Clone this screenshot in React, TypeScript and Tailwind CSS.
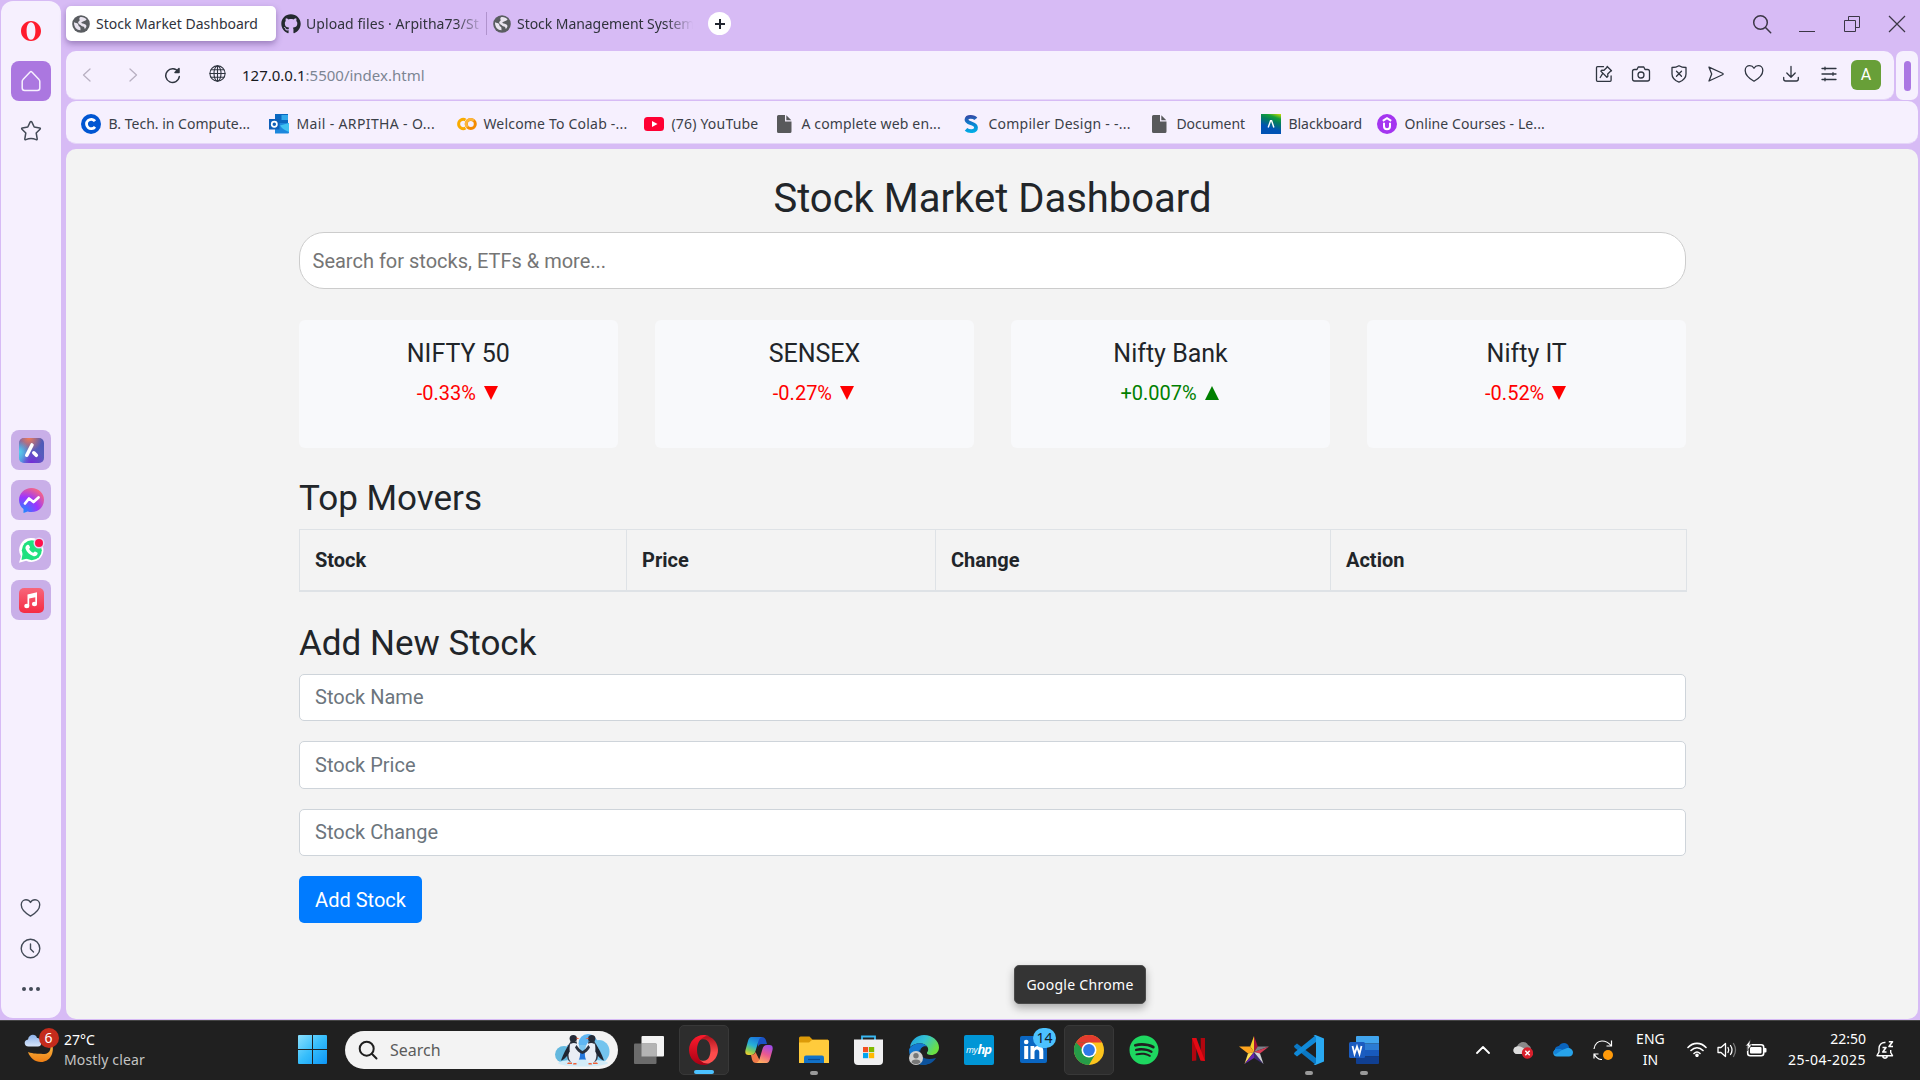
import type { ReactNode } from "react";
import { FaGithub, FaSpotify } from "react-icons/fa";

type IconProps = { className?: string };

/* ---------- browser icons ---------- */

const GlobeFavicon = () => (
  <svg viewBox="0 0 18 18" className="size-[18px] shrink-0">
    <circle cx="9" cy="9" r="8.8" fill="#5a5d61" />
    <path
      d="M2 7.2c1.6.9 3 .7 3.8 1.6.9 1 .4 2.2 1.5 2.8 1.3.7 1.2 1.7 1.2 3.6-3.6 0-6.7-3-6.5-8zM8 2.2c2.5-.6 5.3.6 6.6 2.3-1 .7-1.2 1.5-2.4 1.5-.9 0-1.2.9-2.2 1-1.1.1-.6 1.5.6 1.6 1.7.2 3.3.9 3.8 2.2.3 1-.8 2.6-1.8 3.3.1-1.3-.4-2.2-1.6-2.500C9.500 11.200 9 10 7.500 9.400 5.600 8.500 5.800 6.600 7.200 6c1-.4.200-1.400.1-2.200-.1-.6.200-1.300.7-1.600z"
      fill="#e9e4ef"
    />
  </svg>
);

const FileIcon = () => (
  <svg viewBox="0 0 15 18" className="h-[18px] w-[15px]">
    <path d="M1.5 0H8v6.5h6.5v10A1.5 1.5 0 0 1 13 18H1.5A1.5 1.5 0 0 1 0 16.5v-15A1.5 1.5 0 0 1 1.5 0z" fill="#58595b" />
    <path d="M9.3.2l5 5h-5z" fill="#58595b" />
  </svg>
);

const OperaMark = ({ className }: IconProps) => (
  <svg viewBox="0 0 20 20" className={className}>
    <path
      fillRule="evenodd"
      d="M10 0c5.6 0 10 4.5 10 10s-4.4 10-10 10S0 15.5 0 10 4.400 0 10 0zm0 1.200C7.200 1.200 5.600 5 5.600 10s1.600 8.800 4.400 8.800 4.400-3.800 4.400-8.800S12.800 1.200 10 1.200z"
      fill="#ff1b2d"
    />
  </svg>
);

const Line = ({ className, children, box = "0 0 20 20", w = 1.3 }: { className?: string; children: ReactNode; box?: string; w?: number }) => (
  <svg viewBox={box} className={className} fill="none" stroke="currentColor" strokeWidth={w} strokeLinecap="round" strokeLinejoin="round">
    {children}
  </svg>
);

const HeartShape = () => <path d="M10 17.200C6.500 15.200 1.200 11.500 1.200 6.400 1.200 3.600 3.200 1.700 5.700 1.700c1.900 0 3.400.9 4.300 2.500.9-1.600 2.400-2.500 4.300-2.500 2.500 0 4.500 1.900 4.500 4.700 0 5.100-5.300 8.800-8.800 10.800z" />;

const toolbarIcons: ReactNode[] = [
  <>
    <path d="M9.500 2.700H3.500q-1 0-1 1v12.600q0 1 1 1h12.600q1 0 1-1V12" />
    <path d="M13.200 2.500l4.300 4.300-1 .4-2.800 2.800.2 2.200-1 1-4.300-4.300M13.200 2.500l-.4 1-2.800 2.800-2.200-.2-1 1 2.100 2.100M8.900 9.200L6.200 13.500" />
  </>,
  <>
    <path d="M3.500 5.500H6L7.200 3h5.600L14 5.500h2.500q2 0 2 2V15q0 2-2 2h-13q-2 0-2-2V7.500q0-2 2-2z" />
    <circle cx="10" cy="11" r="3" />
  </>,
  <>
    <path d="M10 1.700c2 1.300 4.500 1.800 7 1.800V10c0 4-3.500 6.800-7 8.200C6.500 16.800 3 14 3 10V3.500c2.500 0 5-.5 7-1.800z" />
    <path d="M7.500 7.200l5 5M12.500 7.200l-5 5" />
  </>,
  <path d="M3 3.200L17 9.500v1L3 17l2.700-7z" />,
  <HeartShape />,
  <path d="M10 2.500v10.500M5.800 9l4.200 4.200L14.200 9M2.700 13.500V15q0 2 2 2h10.600q2 0 2-2v-1.500" />,
  <path d="M3 4.500h14M3 10h14M3 15.500h14M6 3.200v2.600M14 8.700v2.600M6 14.200v2.600" />,
];

/* ---------- browser data ---------- */

const bookmarks: { icon: ReactNode; label: string; width: string; tracking: string }[] = [
  {
    icon: (
      <svg viewBox="0 0 20 20" className="size-5">
        <circle cx="10" cy="10" r="10" fill="#0056d2" />
        <path d="M14 7.200a4.700 4.700 0 1 0 0 5.600" fill="none" stroke="#fff" strokeWidth="2.8" />
      </svg>
    ),
    label: "B. Tech. in Compute...",
    width: "w-[188px]",
    tracking: "tracking-normal",
  },
  {
    icon: (
      <svg viewBox="0 0 20 20" className="size-5">
        <path d="M6 0h13v11H6z" fill="#0a68c0" />
        <path d="M12.500 1H19v5h-6.500z" fill="#32a8ea" />
        <path d="M6 9l14 0v9.500q0 1-1 1H6z" fill="#1c87dd" />
        <path d="M20 9v9q-7-3-9-6.500z" fill="#3fc2f2" />
        <path d="M0 5h10.500v10.500H0z" fill="#0f5fb8" />
        <circle cx="5.300" cy="10.200" r="2.600" fill="none" stroke="#fff" strokeWidth="1.7" />
      </svg>
    ),
    label: "Mail - ARPITHA - O...",
    width: "w-[187px]",
    tracking: "tracking-[0.37px]",
  },
  {
    icon: (
      <svg viewBox="0 0 21 20" className="h-5 w-[21px] shrink-0" fill="none" strokeWidth="3">
        <path d="M9.500 6A4.600 4.600 0 1 0 9.500 14" stroke="#f9ab00" />
        <circle cx="14.800" cy="10" r="4.500" stroke="#f48b00" />
        <path d="M11.500 13.200A4.500 4.500 0 0 1 17.800 6.700" stroke="#fbb53b" />
      </svg>
    ),
    label: "Welcome To Colab -...",
    width: "w-[188px]",
    tracking: "tracking-[0.2px]",
  },
  {
    icon: (
      <svg viewBox="0 0 20 20" className="size-5">
        <rect y="3" width="20" height="14" rx="3.500" fill="#ff0033" />
        <path d="M8 7l5.500 3L8 13z" fill="#fff" />
      </svg>
    ),
    label: "(76) YouTube",
    width: "w-[130px]",
    tracking: "tracking-[0.2px]",
  },
  { icon: <FileIcon />, label: "A complete web en...", width: "w-[187px]", tracking: "tracking-[0.15px]" },
  {
    icon: (
      <svg viewBox="0 0 20 20" className="size-5" fill="none">
        <path d="M14.800 4.800C13 2.500 6 1.500 5.500 5.500 5 10 15 8.500 15 13.500c0 4.500-7 4.500-10 1.800" stroke="url(#bmS)" strokeWidth="3.8" />
        <defs>
          <linearGradient id="bmS" x1="8" y1="0" x2="10" y2="20" gradientUnits="userSpaceOnUse">
            <stop stopColor="#3c3f9e" />
            <stop offset=".5" stopColor="#0a82d0" />
            <stop offset="1" stopColor="#00b5ea" />
          </linearGradient>
        </defs>
      </svg>
    ),
    label: "Compiler Design - -...",
    width: "w-[188px]",
    tracking: "tracking-[0.25px]",
  },
  { icon: <FileIcon />, label: "Document", width: "w-[112px]", tracking: "tracking-normal" },
  {
    icon: (
      <div className="flex size-5 items-center justify-center bg-[linear-gradient(20deg,#0052b4_35%,#04805a_65%,#12a03c_80%,#d5e000)]">
        <svg viewBox="0 0 10 10" className="size-2">
          <path d="M1.500 9.500L4.500.8h1.200l2.900 8.700" fill="none" stroke="#fff" strokeWidth="1.8" />
        </svg>
      </div>
    ),
    label: "Blackboard",
    width: "w-[116px]",
    tracking: "tracking-normal",
  },
  {
    icon: (
      <svg viewBox="0 0 20 20" className="size-5">
        <circle cx="10" cy="10" r="10" fill="#a435f0" />
        <path d="M5.800 6.800L10 4.200l4.200 2.600M7 8.800v3.500q0 3 3 3t3-3V8.800" fill="none" stroke="#fff" strokeWidth="2" />
      </svg>
    ),
    label: "Online Courses - Le...",
    width: "w-[180px]",
    tracking: "tracking-[0.1px]",
  },
];

/* ---------- sidebar ---------- */

const AriaLogo = () => (
  <svg viewBox="0 0 25 25" className="size-[25px]">
    <defs>
      <linearGradient id="ar1" x1="0" y1="1" x2="1" y2="0">
        <stop stopColor="#49c2ea" />
        <stop offset=".4" stopColor="#5a62c0" />
        <stop offset="1" stopColor="#4c57b5" />
      </linearGradient>
      <radialGradient id="ar2" cx=".4" cy="0" r=".55">
        <stop stopColor="#f27a56" />
        <stop offset="1" stopColor="#f27a56" stopOpacity="0" />
      </radialGradient>
      <radialGradient id="ar3" cx=".5" cy="1" r=".55">
        <stop stopColor="#7527d5" />
        <stop offset="1" stopColor="#7527d5" stopOpacity="0" />
      </radialGradient>
      <radialGradient id="ar4" cx="0" cy=".55" r=".45">
        <stop stopColor="#56d0ee" />
        <stop offset="1" stopColor="#56d0ee" stopOpacity="0" />
      </radialGradient>
    </defs>
    <rect width="25" height="25" rx="5" fill="url(#ar1)" />
    <rect width="25" height="25" rx="5" fill="url(#ar2)" />
    <rect width="25" height="25" rx="5" fill="url(#ar3)" />
    <rect width="25" height="25" rx="5" fill="url(#ar4)" />
    <path d="M13 7L7.800 17.200M14.800 14.800l2.500 2.500" stroke="#fff" strokeWidth="3.6" strokeLinecap="round" />
  </svg>
);

const MessengerLogo = () => (
  <svg viewBox="0 0 25 25" className="size-[25px]">
    <defs>
      <radialGradient id="ms" cx=".15" cy="1" r="1.15">
        <stop stopColor="#1292ff" />
        <stop offset=".55" stopColor="#9c35ff" />
        <stop offset="1" stopColor="#ff6a78" />
      </radialGradient>
    </defs>
    <path d="M12.500 0C19.500 0 25 5 25 12s-5.500 12-12.500 12q-2 0-3.800-.6L4.500 25V21C1.500 18.800 0 15.500 0 12 0 5 5.500 0 12.500 0z" fill="url(#ms)" />
    <path d="M6 15.500l4-5 4.500 3.500 5-4.500" fill="none" stroke="#fff" strokeWidth="2.8" strokeLinejoin="round" strokeLinecap="round" />
  </svg>
);

const WhatsAppLogo = () => (
  <div className="relative size-[25px]">
    <svg viewBox="0 0 25 25" className="size-[25px]">
      <path d="M12.700 0a12 12 0 1 1-5.500 22.800L0 24.800l2-6.500A12 12 0 0 1 12.700 0z" fill="#fff" />
      <circle cx="12.800" cy="12.300" r="10" fill="#1fe07f" />
      <path d="M3.500 16l-1 6 6-1.500z" fill="#1fe07f" />
      <path d="M8.500 6.800c.7-.3 1.400-.1 1.700.6l.8 1.900c.2.600-.7 1.300-.9 1.700 1 1.900 2.300 3 4.200 3.800.5-.3 1.200-1.500 1.800-1.200l2 1c.7.300.6 1 .3 1.700-.7 1.600-2.600 2.200-4.200 1.700-3.700-1.100-6.300-3.600-7.600-6.900-.6-1.700.3-3.700 1.900-4.300z" fill="#fff" />
    </svg>
    <div className="absolute right-px top-px size-[8px] rounded-full bg-[#ff0f4b] ring-[1.5px] ring-[#e4d6f5]" />
  </div>
);

const MusicLogo = () => (
  <svg viewBox="0 0 25 25" className="size-[25px]">
    <defs>
      <linearGradient id="mu" x1="0" y1="0" x2="0" y2="1">
        <stop stopColor="#f7667b" />
        <stop offset="1" stopColor="#f52b43" />
      </linearGradient>
    </defs>
    <rect width="25" height="25" rx="5" fill="url(#mu)" />
    <path d="M8.500 6.500L18 4.300V16h-1.700V9.200L10.200 10.600V18H8.500z" fill="#fff" />
    <ellipse cx="7.800" cy="18" rx="2.600" ry="2.200" fill="#fff" />
    <ellipse cx="15.500" cy="16" rx="2.600" ry="2.200" fill="#fff" />
  </svg>
);

function Sidebar() {
  return (
    <aside className="ml-px mt-px flex h-[1017px] w-[60px] shrink-0 flex-col items-center rounded-[12px] bg-[#f6f0fe] pb-[13px] pt-5 text-[#434a57]">
      <OperaMark className="size-5" />
      <div className="mt-5 flex size-10 items-center justify-center rounded-[8px] bg-[#ab77e0] text-[#f6f0fe]">
        <Line className="size-[22px]" box="0 0 22 22" w={1.5}>
          <path d="M11 1.500q.5 0 .9.500L19 9.500q.8.800.8 2V18q0 2.500-2.500 2.500H4.700Q2.200 20.500 2.200 18v-6.500q0-1.200.8-2L10.100 2q.4-.5.900-.5z" />
        </Line>
      </div>
      <Line className="mr-px mt-[19px] size-[22px]" box="0 0 22 22" w={1.5}>
        <path d="M11 1.500q.6 0 .9.600l2.300 4.900 5.400.9q1.300.3.400 1.300L16.200 13l1 5.800q.1 1.400-1.100.8Q11 17.500 5.900 19.600q-1.200.6-1.100-.8l1-5.800L2 9.200q-.9-1 .4-1.300l5.400-.9 2.300-4.900q.3-.6.900-.6z" />
      </Line>
      <div className="mt-[288px] flex flex-col gap-[10px]">
        {[<AriaLogo />, <MessengerLogo />, <WhatsAppLogo />, <MusicLogo />].map((logo, i) => (
          <div key={i} className="flex size-10 items-center justify-center rounded-[8px] bg-[#c9afe8]">
            {logo}
          </div>
        ))}
      </div>
      <div className="mr-px mt-auto flex flex-col items-center">
        <Line className="size-[21px]" w={1.3}>
          <HeartShape />
        </Line>
        <Line className="mt-[19px] size-[21px]" box="0 0 21 21" w={1.4}>
          <circle cx="10.500" cy="10.500" r="9.300" />
          <path d="M10.500 6v5l3 3" />
        </Line>
        <div className="mb-[14px] mt-7 flex gap-[3px]">
          <span className="size-1 rounded-full bg-[#434a57]" />
          <span className="size-1 rounded-full bg-[#434a57]" />
          <span className="size-1 rounded-full bg-[#434a57]" />
        </div>
      </div>
    </aside>
  );
}

/* ---------- browser chrome ---------- */

function TabBar() {
  return (
    <div className="flex h-[51px] items-start text-[14px] leading-5 text-[#30333c]">
      <div className="mt-[6px] flex h-[35px] w-[210px] items-center gap-[6px] rounded-[5px] bg-white pl-[6px] shadow-[0_3px_6px_rgba(80,50,120,0.45)]">
        <GlobeFavicon />
        <span className="whitespace-nowrap">Stock Market Dashboard</span>
      </div>
      <div className="mt-[6px] flex h-[35px] w-[210px] items-center pl-[5px]">
        <FaGithub className="size-5 shrink-0 text-[#24292f]" />
        <span className="ml-[5px] w-[175px] overflow-hidden whitespace-nowrap tracking-[0.06px] [mask-image:linear-gradient(to_right,#000_150px,transparent_178px)]">
          Upload files · Arpitha73/St
        </span>
      </div>
      <div className="mt-3 h-[23px] w-px bg-[#b093cd]" />
      <div className="mt-[6px] flex h-[35px] w-[211px] items-center gap-[6px] pl-[6px]">
        <GlobeFavicon />
        <span className="w-[180px] whitespace-nowrap tracking-[-0.05px] [mask-image:linear-gradient(to_right,#000_148px,transparent_176px)]">
          Stock Management System
        </span>
      </div>
      <div className="ml-[10px] mt-3 flex size-[23px] items-center justify-center rounded-full bg-white">
        <svg viewBox="0 0 10 10" className="size-[10px]">
          <path d="M5 0v10M0 5h10" stroke="#20252e" strokeWidth="2" />
        </svg>
      </div>
      <div className="ml-auto mr-3 mt-[14px] flex items-center text-[#3b3645]">
        <Line className="size-5" w={1.5}>
          <circle cx="8.500" cy="8.500" r="6.800" />
          <path d="M13.500 13.500l5.200 5.200" />
        </Line>
        <svg viewBox="0 0 18 20" className="ml-[26px] h-5 w-[18px]">
          <path d="M1 17.500h16" stroke="currentColor" />
        </svg>
        <svg viewBox="0 0 18 18" className="ml-[27px] size-[18px]" fill="none" stroke="currentColor">
          <path d="M1.500 5.500h11v11h-11zM5.500 5.500v-4h11v11h-4" />
        </svg>
        <svg viewBox="0 0 18 18" className="ml-[27px] size-[18px]">
          <path d="M1 1l16 16M17 1L1 17" stroke="currentColor" strokeWidth="1.2" />
        </svg>
      </div>
    </div>
  );
}

function AddressBar() {
  return (
    <div className="flex h-[49px] gap-[2px]">
      <div className="flex flex-1 items-center rounded-[10px] border-b border-[#e5d6f8] bg-[#f6f0fe] text-[#2f3540]">
        <Line className="ml-[16px] h-[14px] w-[9px] text-[#b8b0c2]" box="0 0 9 14" w={1.3}>
          <path d="M8 1L1.500 7 8 13" />
        </Line>
        <Line className="ml-[38px] h-[14px] w-[9px] text-[#b8b0c2]" box="0 0 9 14" w={1.3}>
          <path d="M1 1l6.500 6L1 13" />
        </Line>
        <Line className="ml-[26px] size-[17px]" box="0 0 17 17" w={1.5}>
          <path d="M14.300 5A6.800 6.800 0 1 0 15.300 9.500M15 1.500V5.500h-4z" />
        </Line>
        <Line className="-mt-[3px] ml-[28px] size-[17px]" box="0 0 17 17" w={1.1}>
          <circle cx="8.500" cy="8.500" r="7.600" />
          <ellipse cx="8.500" cy="8.500" rx="3.500" ry="7.600" />
          <path d="M1 8.500h15M8.500 1v15M2.200 4.700h12.600M2.200 12.300h12.600" />
        </Line>
        <span className="ml-4 whitespace-nowrap text-[15px] leading-5">
          <span className="text-[#17191f]">127.0.0.1</span>
          <span className="text-[#7c8593]">:5500/index.html</span>
        </span>
        <div className="-mt-[2px] ml-auto flex items-center gap-[17.5px]">
          {toolbarIcons.map((icon, i) => (
            <Line key={i} className="size-5" w={1.3}>
              {icon}
            </Line>
          ))}
        </div>
        <div className="ml-[12.5px] mr-[13px] flex size-[30px] items-center justify-center rounded-[6px] bg-[#689f38] font-[Roboto,sans-serif] text-[16px] text-white">
          A
        </div>
      </div>
      <div className="flex w-[22px] items-center justify-center rounded-[7px] bg-[#f6f0fe]">
        <div className="h-[30px] w-[7px] rounded-full bg-[#ab77e3]" />
      </div>
    </div>
  );
}

function BookmarkBar() {
  return (
    <div className="mt-px flex h-[43px] items-center rounded-[10px] border-b border-[#e5d6f8] bg-[#f6f0fe] pl-[15px] pt-[3px] text-[14px] leading-5 text-[#3b3f48]">
      {bookmarks.map((b) => (
        <div key={b.label} className={`flex shrink-0 items-center ${b.width}`}>
          <div className="mr-[7.4px] flex w-5 justify-center">{b.icon}</div>
          <span className={`whitespace-nowrap ${b.tracking}`}>{b.label}</span>
        </div>
      ))}
    </div>
  );
}

/* ---------- dashboard page ---------- */

const indices = [
  { name: "NIFTY 50", change: "-0.33%", up: false },
  { name: "SENSEX", change: "-0.27%", up: false },
  { name: "Nifty Bank", change: "+0.007%", up: true },
  { name: "Nifty IT", change: "-0.52%", up: false },
];

const columns = [
  { label: "Stock", width: "w-[327px]" },
  { label: "Price", width: "w-[309px]" },
  { label: "Change", width: "w-[395px]" },
  { label: "Action", width: "w-[356px]" },
];

function Dashboard() {
  return (
    <main className="mt-[5px] h-[870px] overflow-hidden rounded-[10px] bg-[#f3f3f3] pl-px pt-[25px] font-[Roboto,sans-serif] text-[20px] leading-[30px] text-[#212529]">
      <div className="mx-auto w-[1387px]">
        <h1 className="pt-px text-center text-[40px] leading-[48px]">Stock Market Dashboard</h1>
        <input
          className="mt-[9px] block h-[57px] w-full rounded-[25px] border border-[#ccc] bg-white px-[12.5px] placeholder:text-[#757575]"
          placeholder="Search for stocks, ETFs & more..."
        />
        <div className="mt-[31px] grid grid-cols-4 gap-[37.5px]">
          {indices.map((x) => (
            <div key={x.name} className="h-[127.5px] rounded-[6px] bg-[#f8f9fb] pt-[19px] text-center">
              <h5 className="text-[25px] leading-[30px]">{x.name}</h5>
              <p className={`mt-[9px] flex items-center justify-center gap-2 pr-[2px] ${x.up ? "text-[#008000]" : "text-[#ff0000]"}`}>
                <span>{x.change}</span>
                <svg viewBox="0 0 14 14" className="size-[14px]">
                  <path d={x.up ? "M7 0l7 14H0z" : "M0 0h14L7 14z"} fill="currentColor" />
                </svg>
              </p>
            </div>
          ))}
        </div>
        <h2 className="mt-[30.5px] text-[35px] leading-[42px]">Top Movers</h2>
        <table className="mt-[9px] w-full table-fixed border-collapse border border-[#dee2e6]">
          <thead>
            <tr>
              {columns.map((c) => (
                <th
                  key={c.label}
                  className={`h-[61px] border border-b-2 border-[#dee2e6] pl-[15px] text-left font-bold ${c.width}`}
                >
                  {c.label}
                </th>
              ))}
            </tr>
          </thead>
        </table>
        <h2 className="mt-[31px] text-[35px] leading-[42px]">Add New Stock</h2>
        <div className="mt-[9px] flex flex-col gap-5">
          {["Stock Name", "Stock Price", "Stock Change"].map((p) => (
            <input
              key={p}
              placeholder={p}
              className="h-[47.5px] w-full rounded-[5px] border border-[#ced4da] bg-white px-[15px] placeholder:text-[#6c757d]"
            />
          ))}
        </div>
        <button className="mt-5 h-[47px] w-[123px] rounded-[5px] bg-[#007bff] text-white">Add Stock</button>
      </div>
    </main>
  );
}

/* ---------- taskbar ---------- */

const Penguin = ({ flip }: { flip?: boolean }) => (
  <g transform={flip ? "translate(55 0) scale(-1 1)" : undefined}>
    <path d="M16 8.500C12 12 11.500 18 12 23c.3 3 1.500 5.500 3.500 6l4-20z" fill="#3a404e" />
    <path d="M16.500 9c3-1.800 6.300 0 7.500 4 1.500 5 1.700 11-.5 14.500-1.800 2.500-7 2.500-8.700 0-2-3.500-1.800-14 1.700-18.500z" fill="#e9edf5" />
    <path d="M14.500 11.500C11.500 14 8.500 21 6 27.500c3-.5 7-5 8.700-9z" fill="#1f2531" />
    <path d="M21.500 12c1.500 2.500 4 5 6.700 6.500l-.7 2.500c-3.300-1.200-6-3.500-7.500-6.500z" fill="#2a303d" />
    <ellipse cx="18.300" cy="5.600" rx="3.700" ry="3.600" fill="#262c38" />
    <path d="M15.500 8q3 2 6 .2l.5 2.500q-3.500-1.500-6.500.3z" fill="#262c38" />
    <path d="M21.500 4.500l3 .9-3 .9zM13 29.500h4V31h-5zM18.500 30h3v1.500h-3.500z" fill="#f0603a" />
  </g>
);

const PenguinArt = () => (
  <svg viewBox="0 0 55 34" className="h-[34px] w-[55px]">
    <circle cx="33" cy="10.500" r="9.500" fill="#5fb6f2" />
    <ellipse cx="9" cy="21.500" rx="9" ry="8.500" fill="#64b8de" />
    <ellipse cx="44" cy="18.500" rx="10.500" ry="11.500" fill="#74c4ee" />
    <path d="M12 12h31v17H12z" fill="#7cc6f0" />
    <path d="M20 24l4-4h8l4 4v4H20z" fill="#2577dc" />
    <ellipse cx="28" cy="30" rx="25" ry="3.500" fill="#d3ecf8" />
    <Penguin />
    <Penguin flip />
  </svg>
);

const WindowsLogo = () => (
  <svg viewBox="0 0 29 29" className="size-[29px]">
    <defs>
      <linearGradient id="win" x1="0" y1="0" x2="1" y2="1">
        <stop stopColor="#8be0fd" />
        <stop offset=".5" stopColor="#35bdfb" />
        <stop offset="1" stopColor="#0d95f5" />
      </linearGradient>
    </defs>
    <path d="M1 0h13v14H0V1q0-1 1-1zM15 0h13q1 0 1 1v13H15zM0 15h14v14H1q-1 0-1-1zM15 15h14v13q0 1-1 1H15z" fill="url(#win)" />
  </svg>
);

const TaskViewIcon = () => (
  <svg viewBox="0 0 30 28" className="h-7 w-[30px]">
    <rect x="7.500" width="22.500" height="20.500" rx="1" fill="#f3f3f3" />
    <rect y="7.500" width="22.500" height="20.500" rx="1" fill="#6b6b6b" />
    <path d="M7.500 7.500h15v13h-15z" fill="#b4b4b4" />
  </svg>
);

const OperaTask = () => (
  <svg viewBox="0 0 29 30" className="h-[30px] w-[29px]">
    <defs>
      <linearGradient id="op1" x1="0" y1="0" x2="0" y2="1">
        <stop stopColor="#ff1b2d" />
        <stop offset="1" stopColor="#a70014" />
      </linearGradient>
      <linearGradient id="op2" x1="0" y1="0" x2="0" y2="1">
        <stop stopColor="#b0101c" />
        <stop offset=".6" stopColor="#ff4b4b" />
        <stop offset="1" stopColor="#ff5050" />
      </linearGradient>
    </defs>
    <path d="M9.500 5.500C13 1 18 1 20 1.500c5 2 9 7 9 13.500s-4 11.500-9 13.500c-2 .5-7 .5-10.500-4C19 29 21.500 21 21.500 15S19 1 9.500 5.500z" fill="url(#op2)" />
    <path d="M14.500 0c2.200 0 4 .5 6 1.500C14 0 8 6 8 15s6 15 12.500 13.500c-2 1-3.800 1.500-6 1.500C6.500 30 0 23.300 0 15S6.500 0 14.500 0z" fill="url(#op1)" />
  </svg>
);

const CopilotIcon = () => (
  <svg viewBox="0 0 28 26" className="h-[26px] w-7">
    <defs>
      <linearGradient id="cp1" x1=".6" y1="0" x2=".2" y2="1">
        <stop stopColor="#1b78dc" />
        <stop offset=".45" stopColor="#27b0d8" />
        <stop offset=".75" stopColor="#7ccb5c" />
        <stop offset="1" stopColor="#f3cf2c" />
      </linearGradient>
      <linearGradient id="cp2" x1=".7" y1="0" x2=".3" y2="1">
        <stop stopColor="#a04be8" />
        <stop offset=".5" stopColor="#ec5a8e" />
        <stop offset="1" stopColor="#ffb25e" />
      </linearGradient>
    </defs>
    <path d="M12 0h5q3 0 4 3.500l1 3.500h-5.500q-2.500 0-3.500 3z" fill="#1b52c4" />
    <path d="M6.500 0H17q-2.500.5-3.500 4L10.500 14q-1 4-4.500 4H3.500Q-.5 18 .5 13L3 4Q4 0 6.500 0z" fill="url(#cp1)" />
    <path d="M16 26h-5q-3 0-4-3.500L6 18q3.500 0 4.500-3z" fill="#ef7a48" />
    <path d="M21.500 26H11q2.500-.5 3.500-4l3-10q1-4 4.500-4h2.500q4 0 3 5L25 22q-1 4-3.500 4z" fill="url(#cp2)" />
  </svg>
);

const FolderIcon = () => (
  <svg viewBox="0 0 30 27" className="h-[27px] w-[30px]">
    <path d="M1.500.5h9l3 3H29v8H0V2q0-1.500 1.500-1.500z" fill="#dc9a08" />
    <path d="M0 6.500h10l3-2.500h16q1 0 1 1v22H0z" fill="#ffcb3c" />
    <path d="M5 27v-5.500q0-2 2-2h16q2 0 2 2V27z" fill="#1272c8" />
    <path d="M9 23.500h12" stroke="#0b4b92" strokeWidth="1.2" />
  </svg>
);

const StoreIcon = () => (
  <svg viewBox="0 0 29 30" className="h-[30px] w-[29px]">
    <path d="M8 6V1.500h13V6" fill="none" stroke="#39b8f2" strokeWidth="1.8" />
    <path d="M0 4.500h29V26q0 4-4 4H4q-4 0-4-4z" fill="#f0f0f1" />
    <path d="M9 12h5.200v5.200H9z" fill="#f25022" />
    <path d="M15 12h5.200v5.200H15z" fill="#7fba00" />
    <path d="M9 18h5.200v5.200H9z" fill="#00a4ef" />
    <path d="M15 18h5.200v5.200H15z" fill="#ffb900" />
  </svg>
);

const EdgeIcon = () => (
  <svg viewBox="0 0 30 30" className="size-[30px]">
    <defs>
      <linearGradient id="ed1" x1="0" y1="0" x2="1" y2=".5">
        <stop stopColor="#1c9de0" />
        <stop offset=".5" stopColor="#35c3d3" />
        <stop offset="1" stopColor="#6be042" />
      </linearGradient>
    </defs>
    <path d="M15 0c8.500 0 15 6 15 12.500 0 5-4 7.500-8 7.500-3 0-4.500-1.300-4-2.500 1.500-1.500 1.500-3.500.5-5.500C16 8 8 6 1 12 2 5 8 0 15 0z" fill="url(#ed1)" />
    <path d="M0 14.500C3 8 14 6 18 11.500 14 10 10.500 13.500 11 18c.6 5.500 6 9 12 8.500-9 7-23 2.500-23-12z" fill="#1379d2" />
    <path d="M11.500 14c-2 7 4 12.500 15.500 9-3 5-8.500 7-12.500 7C7 29 5 19 11.500 14z" fill="#0c529c" />
    <circle cx="7" cy="23" r="7" fill="#cfcfcf" />
    <circle cx="7" cy="20.800" r="2.700" fill="#777" />
    <path d="M2.500 27.500q0-3 4.500-3t4.500 3Q7 31 2.500 27.500z" fill="#777" />
  </svg>
);

const LinkedInIcon = () => (
  <div className="relative size-[27px]">
    <div className="size-[27px] rounded-[2px] bg-[#0a66c2]">
      <svg viewBox="0 0 27 27" className="size-[27px]" fill="#fff">
        <circle cx="6.200" cy="6" r="2.300" />
        <path d="M4.200 10h4v13h-4zM10.500 10h3.800v2c2-3.500 9-3 9 3v8h-4v-7c0-3.500-4.800-3.500-4.800 0v7h-4z" />
      </svg>
    </div>
    <span className="absolute -right-[9px] -top-[8px] flex h-[20px] w-[23px] items-center justify-center rounded-full bg-[#4cc2ff] text-[14px] leading-none text-[#10202c]">
      14
    </span>
  </div>
);

const ChromeIcon = () => (
  <svg viewBox="0 0 30 30" className="size-[30px]">
    <circle cx="15" cy="15" r="15" fill="#fcc41d" />
    <path d="M15 15L2 7.500A15 15 0 0 1 28 7.500z" fill="#e33b2e" />
    <path d="M2 7.500A15 15 0 0 0 15 30l6.500-11.300L15 15z" fill="#269c48" />
    <path d="M2 7.500l6.500 11.300L15 15V7.500z" fill="#269c48" />
    <path d="M2 7.500L15 7.500V15L8 14z" fill="#e33b2e" />
    <path d="M2 7.500L8.500 18.700 7.500 13z" fill="#269c48" />
    <path d="M15 7.500h13l.5 1-6 8z" fill="#fcc41d" />
    <circle cx="15" cy="15" r="7.500" fill="#fff" />
    <circle cx="15" cy="15" r="5.900" fill="#2f79e8" />
  </svg>
);

const NetflixIcon = () => (
  <svg viewBox="0 0 13 23" className="h-[23px] w-[13px]">
    <path d="M0 0h4.300v22.500L0 23zM8.700 0H13v23l-4.300-.5z" fill="#b1060f" />
    <path d="M0 0h4.300L13 23l-4.500-.6z" fill="#e50914" />
  </svg>
);

const StarIcon = () => (
  <svg viewBox="0 0 30 28" className="h-[28px] w-[30px]">
    <path d="M15 0l-3.800 10.500L15 16z" fill="#f6cf2b" />
    <path d="M15 0l3.800 10.500L15 16z" fill="#a5163a" />
    <path d="M0 10.500h11.200L15 16l-6 1.500z" fill="#ffa51e" />
    <path d="M18.800 10.500H30L15 16z" fill="#7b7f88" />
    <path d="M30 10.500l-9 7L15 16z" fill="#d53b55" />
    <path d="M5.500 28L9 17.500 15 16z" fill="#ffe05a" />
    <path d="M5.500 28L15 16v6z" fill="#6526b0" />
    <path d="M24.500 28L15 22v-6z" fill="#3d2a73" />
    <path d="M24.500 28L15 16l6 1.500z" fill="#d0d2d6" />
  </svg>
);

const VsCodeIcon = () => (
  <svg viewBox="0 0 30 30" className="size-[30px]">
    <path d="M0 11l3-2.500L22 23v7L1 13q-1-1-1-2z" fill="#0b78c4" />
    <path d="M0 19l3 2.500L22 7V0L1 17q-1 1-1 2z" fill="#1089d8" />
    <path d="M21.500 0L30 3.500v23L21.500 30q-1 0-2-1 2.500.5 2.500-1.500v-25Q22 .5 19.500 1q1-1 2-1z" fill="#29a9f2" />
  </svg>
);

const WordIcon = () => (
  <svg viewBox="0 0 30 28" className="h-7 w-[30px]">
    <path d="M8 0h21q1 0 1 1v6.500H7V1q0-1 1-1z" fill="#41a5ee" />
    <path d="M7 7.500h23V14H7z" fill="#2b7cd3" />
    <path d="M7 14h23v6.500H7z" fill="#185abd" />
    <path d="M7 20.500h23V27q0 1-1 1H8q-1 0-1-1z" fill="#103f91" />
    <rect y="6" width="16" height="16" rx="1.500" fill="#1b5cc0" />
    <path d="M3.500 10l2 8L8 10.500l2.500 7.500 2-8" fill="none" stroke="#fff" strokeWidth="1.8" />
  </svg>
);

const apps: { icon: ReactNode; active?: boolean; mark?: "blue" | "gray" }[] = [
  { icon: <TaskViewIcon /> },
  { icon: <OperaTask />, active: true, mark: "blue" },
  { icon: <CopilotIcon /> },
  { icon: <FolderIcon />, mark: "gray" },
  { icon: <StoreIcon /> },
  { icon: <EdgeIcon /> },
  {
    icon: (
      <div className="flex size-[30px] items-center justify-center rounded-[2px] bg-[#0096d6] font-['Open_Sans',sans-serif] italic leading-none text-white">
        <span className="text-[9px] font-normal tracking-[-0.3px]">my</span>
        <span className="text-[13px] font-bold tracking-[-1px]">hp</span>
      </div>
    ),
  },
  { icon: <LinkedInIcon /> },
  { icon: <ChromeIcon />, active: true },
  { icon: <FaSpotify className="size-[30px] text-[#1ed760]" /> },
  { icon: <NetflixIcon /> },
  { icon: <StarIcon /> },
  { icon: <VsCodeIcon />, mark: "gray" },
  { icon: <WordIcon />, mark: "gray" },
];

function Weather() {
  return (
    <div className="flex w-[298px] items-center pl-6">
      <div className="relative mb-[7px] size-9">
        <svg viewBox="0 0 36 36" className="size-9">
          <defs>
            <linearGradient id="moon" x1="0" y1="0" x2="0" y2="1">
              <stop stopColor="#f7c04a" />
              <stop offset="1" stopColor="#f07f14" />
            </linearGradient>
            <linearGradient id="cloud" x1="0" y1="0" x2="0" y2="1">
              <stop stopColor="#8db2ea" />
              <stop offset="1" stopColor="#d8e6fa" />
            </linearGradient>
          </defs>
          <path d="M24 14c5 5 2 13-5 12-6-.5-9 0-15-2 2 6 7 10 13 10C26 34 31 25 28 15z" fill="url(#moon)" />
          <path d="M4.500 18.500c-5 0-5-6.500-.5-7C5 5.500 12 5.500 13 10c5 0 6 8.500 1 8.500z" fill="url(#cloud)" />
        </svg>
        <span className="absolute left-[14.5px] top-0 flex size-5 items-center justify-center rounded-full bg-[#c42b1c] text-[14px] leading-none text-white">
          6
        </span>
      </div>
      <div className="ml-[4px] whitespace-nowrap text-[14px] leading-5">
        <div className="text-white">27°C</div>
        <div className="tracking-[0.15px] text-[#c4c4c4]">Mostly clear</div>
      </div>
    </div>
  );
}

function Tray() {
  return (
    <div className="ml-auto flex items-center whitespace-nowrap pr-[26px] text-[14px] leading-[20.5px] text-white">
      <Line className="h-2 w-[14px]" box="0 0 14 8" w={1.8}>
        <path d="M1 7l6-6 6 6" />
      </Line>
      <svg viewBox="0 0 20 18" className="ml-[23px] h-[18px] w-5">
        <path d="M4 13c-5-.5-4.500-7 0-7.500C6 0 13-.5 15 4c4 1 4 8 0 9z" fill="#8a8a8a" />
        <path d="M4 13c-5-.5-4.500-7 0-7.500 3-1 5 1 9 3V13z" fill="#dcdcdc" />
        <circle cx="14.500" cy="12" r="5.700" fill="#d8202c" />
        <path d="M12.300 9.800l4.400 4.400M16.700 9.800l-4.400 4.400" stroke="#fff" strokeWidth="1.4" />
      </svg>
      <svg viewBox="0 0 20 14" className="ml-5 h-[14px] w-5">
        <path d="M2 8C1 4 5 3 6 3c2-4 9-4 10 1l1 4z" fill="#0a64bd" />
        <path d="M4 13.500C-1 13.500-1 6.500 4 6q3-.5 5 1l4-1.500c3-1.500 7 .5 7 4 0 2.500-2 4-4 4z" fill="#27a3ea" />
        <path d="M4 6q3-.5 5 1l-6.500 4.500C-1 10 1 6 4 6z" fill="#1583d8" />
      </svg>
      <svg viewBox="0 0 20 20" className="ml-5 size-5">
        <path d="M1 9C2 3 6 1 9 1c4 0 7 2 9 4.500M18.500 0.500v5.500h-5M1 18.500V14h4.500M1.500 14.500C3 17.500 6 19.500 9 19.500" fill="none" stroke="#fff" strokeWidth="1.2" />
        <circle cx="15" cy="15" r="5" fill="#ff9a0a" />
      </svg>
      <div className="ml-[22px] w-[30px] text-center">
        <div>ENG</div>
        <div>IN</div>
      </div>
      <Line className="ml-[22px] h-[15px] w-5" box="0 0 20 15" w={1.6}>
        <path d="M1 5.500C6 0 14 0 19 5.500M4 8.500c3.500-3.700 8.500-3.700 12 0M7 11.500c2-2 4-2 6 0" />
        <circle cx="10" cy="13.300" r="1" fill="currentColor" />
      </Line>
      <Line className="ml-[10px] h-4 w-5" box="0 0 20 16" w={1.3}>
        <path d="M1 5.500h3l4.500-4v13L4 10.500H1z" />
        <path d="M11 5.500q1.500 2.500 0 5M13.500 3.500q3 4.500 0 9" />
        <path d="M16.500 1.500q4 6.500 0 13" stroke="#777" />
      </Line>
      <svg viewBox="0 0 21 17" className="-mt-[2px] ml-[9px] h-[17px] w-[21px] overflow-visible">
        <rect x="1.700" y="4.700" width="16" height="11" rx="2.500" fill="none" stroke="#fff" strokeWidth="1.6" />
        <rect x="4" y="7" width="11.500" height="6.500" rx="1" fill="#fff" />
        <path d="M18 8h1.500q1 0 1 1v2.500q0 1-1 1H18z" fill="#fff" />
        <path d="M4.500-.5L-.5 6H2L.8 11 6 5H3.700z" fill="#fff" stroke="#202020" strokeWidth=".7" />
      </svg>
      <div className="ml-[20.5px] text-right">
        <div>22:50</div>
        <div className="tracking-[0.5px]">25-04-2025</div>
      </div>
      <svg viewBox="0 0 18 20" className="ml-[10px] h-5 w-[18px]" fill="none" stroke="#fff" strokeWidth="1.4" strokeLinejoin="round">
        <path d="M9.500 2.500C5.500 2 3 5 3 8.500V12L1 15.700h15.500L14.700 12.500V10M6.500 16.500q2.500 3.500 5 0" />
        <path d="M6.500 7.500h3.500L6.800 12h3.700M12.800 1.800h3.700L13 6.500h4" strokeWidth="1.6" />
      </svg>
    </div>
  );
}

function Taskbar() {
  return (
    <footer className="flex h-[60px] w-full items-stretch border-t border-[#454545] bg-[#202020] pb-[2px]">
      <Weather />
      <div className="flex items-center">
        <WindowsLogo />
        <div className="ml-[18px] flex h-[38px] w-[273px] items-center rounded-full bg-[#f3f3f3] pl-[13px]">
          <Line className="size-5 text-[#1f1f1f]" w={2}>
            <circle cx="8.700" cy="8.700" r="7" />
            <path d="M13.800 13.800l4.700 4.700" />
          </Line>
          <span className="ml-3 text-[16px] text-[#5b5b5b]">Search</span>
          <div className="ml-auto mr-2">
            <PenguinArt />
          </div>
        </div>
      </div>
      <div className="ml-[3px] flex items-center">
        {apps.map((a, i) => (
          <div key={i} className="flex w-[55px] justify-center">
            <div
              className={
                a.active
                  ? "relative flex size-[50px] items-center justify-center rounded-[5px] border border-[#383838] bg-[#2d2d2d]"
                  : "relative flex size-[50px] items-center justify-center"
              }
            >
              {a.icon}
              {a.mark === "blue" && <span className="absolute bottom-0 h-1 w-5 rounded-full bg-[#4cc2ff]" />}
              {a.mark === "gray" && <span className="absolute bottom-0 h-1 w-2 rounded-full bg-[#9a9a9a]" />}
            </div>
          </div>
        ))}
      </div>
      <Tray />
    </footer>
  );
}

export default function App() {
  return (
    <div className="relative flex h-[1080px] w-[1920px] flex-col overflow-hidden bg-[#d7bbf5] font-['Noto_Sans',sans-serif]">
      <div className="flex h-[1020px]">
        <Sidebar />
        <div className="ml-[5px] mr-[2px] min-w-0 flex-1">
          <TabBar />
          <AddressBar />
          <BookmarkBar />
          <Dashboard />
        </div>
      </div>
      <Taskbar />
      <div className="absolute left-[1014px] top-[965px] flex h-[39px] w-[132px] items-center justify-center rounded-[5px] border border-[#4a4a4a] bg-[#343434] text-[14px] tracking-[0.3px] text-white shadow-[0_4px_8px_rgba(0,0,0,0.3)]">
        Google Chrome
      </div>
    </div>
  );
}
